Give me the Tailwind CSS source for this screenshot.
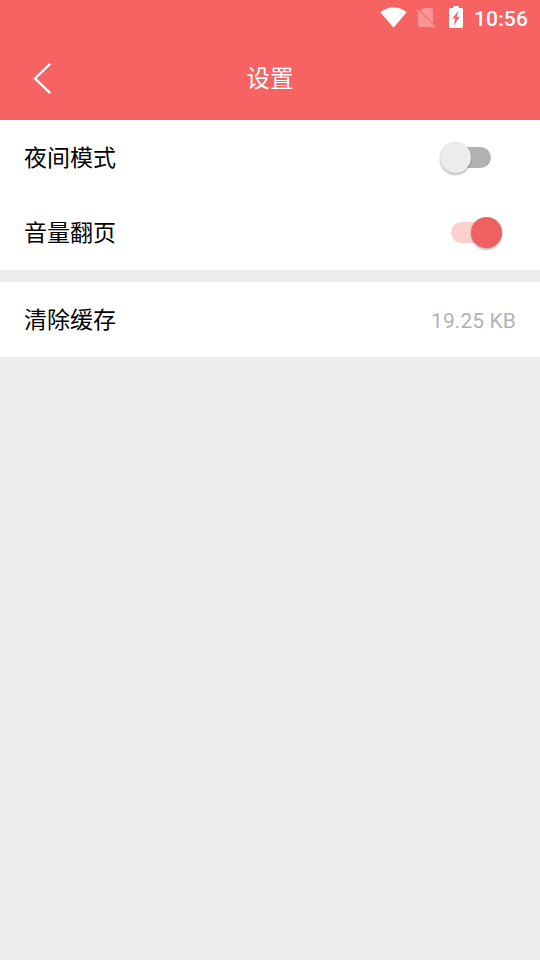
<!DOCTYPE html>
<html lang="zh-CN">
<head>
<meta charset="utf-8">
<title>设置</title>
<script src="https://cdn.jsdelivr.net/npm/@tailwindcss/browser@4"></script>
</head>
<body class="h-screen overflow-hidden bg-[#eeeeee] font-['Roboto','Noto_Sans_CJK_SC',sans-serif]">
<header class="h-[120px] bg-[#f76262] text-white">
  <div class="flex h-9 items-center justify-end pr-3">
    <svg class="mr-[9px] h-9 w-[27px]" viewBox="380 0 27 36" fill="currentColor"><path d="M380.4 12.2Q393.5 2.3 406.6 12.2L393.5 27.8Z"/></svg>
    <svg class="mr-[13px] h-9 w-5" viewBox="416 0 20 36" fill="#fb9494"><path d="M423.6 8H431.3Q433 8 433 9.7V23.4L420.6 11Z"/><path d="M417.2 8.8L435.4 27.1L434.2 28.3L432.6 26.7Q432.1 27 431.3 27H419.7Q418 27 418 25.3V12.2L416 10.1Z"/></svg>
    <svg class="mr-[11px] h-9 w-3.5" viewBox="449 0 14 36"><path d="M453.3 6H458.8V8H461.6Q463 8 463 9.4V26.6Q463 28 461.6 28H450.4Q449 28 449 26.6V9.4Q449 8 450.4 8H453.3Z" fill="white"/><path d="M458.4 10.8L452.2 18.6H455.2L453.8 25.4L459.8 16.8H456.7Z" fill="#f76262"/></svg>
    <span class="w-[54px] pt-[2px] text-[21px] leading-6 font-medium tracking-[0.15px] whitespace-nowrap">10:56</span>
  </div>
  <div class="grid h-[84px] grid-cols-[80px_1fr_80px] items-center">
    <svg class="h-[84px] w-20" viewBox="0 36 80 84" fill="none" stroke="currentColor" stroke-width="2.3"><path d="M50.2 63.8L35 78.5L50.2 93.2"/></svg>
    <h1 class="pt-[2px] text-center text-[23.5px] leading-8">设置</h1>
  </div>
</header>
<main class="text-[23px] text-black">
  <section class="bg-white pl-6">
    <div class="flex h-[75px] items-center justify-between pr-[49px]">
      <span class="pt-1">夜间模式</span>
      <div class="relative h-[21px] w-10 rounded-full bg-[#b2b2b2]"><span class="absolute -top-[5px] -left-[11px] size-[31px] rounded-full bg-[#ececec] shadow-[0_2px_2px_rgba(0,0,0,0.24),0_0_1px_rgba(0,0,0,0.16)]"></span></div>
    </div>
    <div class="flex h-[75px] items-center justify-between pr-[49px]">
      <span class="pt-1">音量翻页</span>
      <div class="relative h-[21px] w-10 rounded-full bg-[#fccfcf]"><span class="absolute -top-[5px] left-5 size-[31px] rounded-full bg-[#f06060] shadow-[0_2px_2px_rgba(0,0,0,0.24),0_0_1px_rgba(0,0,0,0.16)]"></span></div>
    </div>
  </section>
  <section class="mt-3 flex h-[75px] items-center justify-between bg-white px-6">
    <span class="pt-1">清除缓存</span>
    <span class="pt-1 text-[21px] tracking-[0.1px] text-[#b2b2b2]">19.25 KB</span>
  </section>
</main>
</body>
</html>
